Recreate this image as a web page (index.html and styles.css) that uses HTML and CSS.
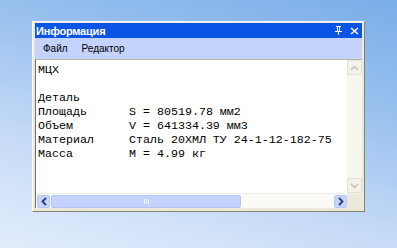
FILE: index.html
```html
<!DOCTYPE html>
<html lang="ru">
<head>
    <meta charset="UTF-8">
    <title>Информация</title>
    <link rel="stylesheet" href="styles.css">
</head>
<body>
    <div class="window">
        <div class="titlebar">
            <span class="title">Информация</span>
            <span class="buttons">
                <svg class="pin" width="9" height="9" viewBox="0 0 9 9">
                    <path d="M2 0h5v1H6v4h2v1H5v3H4V6H1V5h2V1H2z M4 1v4h1V1z" fill="#fff"/>
                </svg>
                <svg class="close" width="9" height="8" viewBox="0 0 9 8">
                    <path d="M1 1l7 6M8 1L1 7" stroke="#fff" stroke-width="1.6"/>
                </svg>
            </span>
        </div>
        <div class="menubar">
            <span class="menu-item">Файл</span>
            <span class="menu-item">Редактор</span>
        </div>
        <div class="editor">
            <div class="editor-body">
                <pre class="text">МЦХ

Деталь
Площадь      S = 80519.78 мм2
Объем        V = 641334.39 мм3
Материал     Сталь 20ХМЛ ТУ 24-1-12-182-75
Масса        M = 4.99 кг</pre>
                <div class="vscroll">
                    <div class="arrow disabled">
                        <svg width="9" height="6" viewBox="0 0 9 6"><path d="M1 5l3.5-3.5L8 5" stroke="#c9c7ba" stroke-width="1.6" fill="none"/></svg>
                    </div>
                    <div class="vtrack"></div>
                    <div class="arrow disabled">
                        <svg width="9" height="6" viewBox="0 0 9 6"><path d="M1 1l3.5 3.5L8 1" stroke="#c9c7ba" stroke-width="1.6" fill="none"/></svg>
                    </div>
                </div>
            </div>
            <div class="hscroll">
                <div class="arrow">
                    <svg width="6" height="9" viewBox="0 0 6 9"><path d="M5 1L1.5 4.5 5 8" stroke="#2a3c74" stroke-width="1.8" fill="none"/></svg>
                </div>
                <div class="htrack">
                    <div class="thumb"><span class="grip"></span></div>
                </div>
                <div class="arrow">
                    <svg width="6" height="9" viewBox="0 0 6 9"><path d="M1 1l3.5 3.5L1 8" stroke="#2a3c74" stroke-width="1.8" fill="none"/></svg>
                </div>
                <div class="corner"></div>
            </div>
        </div>
    </div>
</body>
</html>
```

FILE: styles.css
```css
body {
    margin: 0;
    width: 397px;
    height: 248px;
    overflow: hidden;
    background: linear-gradient(195deg, #7aaee9 0%, #9cc2ef 35%, #c8dcf7 70%, #e2edfc 100%);
    font-family: "Liberation Sans", Arial, sans-serif;
}

.window {
    margin: 21px 0 0 32px;
    width: 327px;
    height: 185px;
    padding: 1px 2px 3px 2px;
    background-color: #ece9d8;
    border: 1px solid;
    border-color: #fbfaf4 #84836f #84836f #fbfaf4;
    display: flex;
    flex-direction: column;
}

.titlebar {
    height: 15px;
    background-color: #0a55e6;
    color: #fff;
    display: flex;
    align-items: center;
    justify-content: space-between;
    padding: 0 3px 0 1px;
}

.title {
    font-weight: bold;
    font-size: 11px;
    letter-spacing: -0.2px;
}

.buttons {
    display: flex;
    align-items: center;
    gap: 7px;
}

.menubar {
    height: 21px;
    background-color: #c3d3fb;
    display: flex;
    align-items: center;
    font-size: 10px;
    color: #000;
    padding-left: 8px;
    gap: 14px;
}

.editor {
    flex: 1;
    display: flex;
    flex-direction: column;
    background-color: #fff;
    border-left: 1px solid #6f6f6f;
    border-top: 1px solid #b9b7a8;
}

.editor-body {
    flex: 1;
    display: flex;
    min-height: 0;
}

.text {
    flex: 1;
    margin: 0;
    padding: 3px 0 0 2px;
    font-family: "Liberation Mono", "Courier New", monospace;
    font-size: 11.67px;
    line-height: 14px;
    color: #000;
    overflow: hidden;
}

.vscroll {
    width: 15px;
    display: flex;
    flex-direction: column;
    background-color: #f6f5ee;
}

.vtrack {
    flex: 1;
}

.arrow {
    width: 13px;
    height: 13px;
    border: 1px solid #b6c8f8;
    border-radius: 2px;
    background-color: #c5d4fd;
    display: flex;
    align-items: center;
    justify-content: center;
    box-sizing: border-box;
}

.arrow.disabled {
    background-color: #f2f1ea;
    border-color: #e4e2d6;
    width: 15px;
    height: 15px;
}

.hscroll {
    height: 14px;
    display: flex;
    align-items: center;
    background-color: #fbfbf6;
    border-top: 1px solid #efeee4;
    padding-left: 1px;
}

.htrack {
    flex: 1;
    height: 13px;
    padding: 0 1px;
}

.thumb {
    width: 190px;
    height: 13px;
    box-sizing: border-box;
    background-color: #c4d2fc;
    border: 1px solid #b3c4f6;
    border-radius: 2px;
    display: flex;
    align-items: center;
    justify-content: center;
}

.grip {
    width: 5px;
    height: 5px;
    border-left: 1px solid #eef2ff;
    border-right: 1px solid #eef2ff;
    box-sizing: border-box;
    position: relative;
}

.grip::after {
    content: "";
    position: absolute;
    left: 1px;
    top: 0;
    width: 1px;
    height: 5px;
    background-color: #eef2ff;
}

.corner {
    width: 15px;
    height: 14px;
    background-color: #ece9d8;
}
```
